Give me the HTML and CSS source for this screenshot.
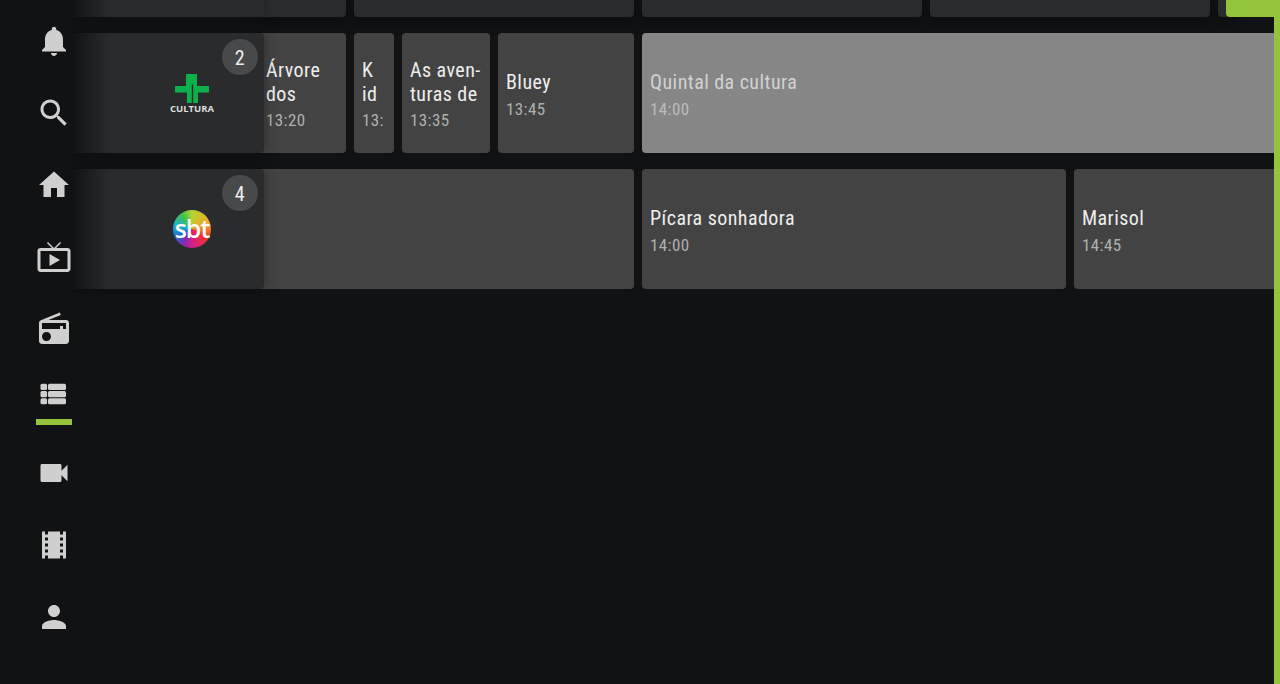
FILE: index.html
```html
<!DOCTYPE html>
<html lang="en">
<head>
    <meta charset="UTF-8">
    <meta name="viewport" content="width=device-width, initial-scale=1.0">
    <title>Guia de TV</title>
    <link rel="stylesheet" href="styles.css">
</head>
<body>

<nav class="sidebar">
    <svg class="nav-icon" viewBox="0 0 24 24"><path d="M12 22c1.1 0 2-.9 2-2h-4c0 1.1.89 2 2 2zm6-6v-5c0-3.07-1.64-5.64-4.5-6.32V4c0-.83-.67-1.5-1.5-1.5s-1.5.67-1.5 1.5v.68C7.63 5.36 6 7.92 6 11v5l-2 2v1h16v-1l-2-2z"/></svg>
    <svg class="nav-icon" viewBox="0 0 24 24"><path d="M15.5 14h-.79l-.28-.27C15.41 12.59 16 11.11 16 9.5 16 5.91 13.09 3 9.5 3S3 5.91 3 9.5 5.91 16 9.5 16c1.61 0 3.09-.59 4.23-1.57l.27.28v.79l5 4.99L20.49 19l-4.99-5zm-6 0C7.01 14 5 11.99 5 9.5S7.01 5 9.5 5 14 7.01 14 9.5 11.99 14 9.5 14z"/></svg>
    <svg class="nav-icon" viewBox="0 0 24 24"><path d="M10 20v-6h4v6h5v-8h3L12 3 2 12h3v8z"/></svg>
    <svg class="nav-icon" viewBox="0 0 24 24"><path d="M21 6h-7.59l3.29-3.29L16 2l-4 4-4-4-.71.71L10.59 6H3c-1.1 0-2 .89-2 2v12c0 1.1.9 2 2 2h18c1.1 0 2-.9 2-2V8c0-1.11-.9-2-2-2zm0 14H3V8h18v12zM9 10v8l7-4z"/></svg>
    <svg class="nav-icon" viewBox="0 0 24 24"><path d="M3.24 6.15C2.51 6.43 2 7.17 2 8v12c0 1.1.89 2 2 2h16c1.11 0 2-.9 2-2V8c0-1.11-.89-2-2-2H8.3l8.26-3.34L15.88 1 3.24 6.15zM7 20c-1.66 0-3-1.34-3-3s1.34-3 3-3 3 1.34 3 3-1.34 3-3 3zm13-8h-2v-2h-2v2H4V8h16v4z"/></svg>
    <div class="nav-active">
        <svg class="nav-icon" viewBox="0 0 24 24">
            <rect x="3" y="5.200" width="4.400" height="4.100" rx="1"/>
            <rect x="3" y="10" width="4.400" height="4.100" rx="1"/>
            <rect x="3" y="14.800" width="4.400" height="4.100" rx="1"/>
            <rect x="8" y="5.200" width="12" height="4.100" rx="1"/>
            <rect x="8" y="10" width="12" height="4.100" rx="1"/>
            <rect x="8" y="14.800" width="12" height="4.100" rx="1"/>
        </svg>
        <div class="nav-bar"></div>
    </div>
    <svg class="nav-icon" viewBox="0 0 24 24"><path d="M17 10.500V7c0-.55-.45-1-1-1H4c-.55 0-1 .45-1 1v10c0 .55.45 1 1 1h12c.55 0 1-.45 1-1v-3.500l4 4v-11l-4 4z"/></svg>
    <svg class="nav-icon" viewBox="0 0 24 24"><path d="M18 3v2h-2V3H8v2H6V3H4v18h2v-2h2v2h8v-2h2v2h2V3h-2zM8 17H6v-2h2v2zm0-4H6v-2h2v2zm0-4H6V7h2v2zm10 8h-2v-2h2v2zm0-4h-2v-2h2v2zm0-4h-2V7h2v2z"/></svg>
    <svg class="nav-icon" viewBox="0 0 24 24"><path d="M12 12c2.21 0 4-1.79 4-4s-1.79-4-4-4-4 1.79-4 4 1.790 4 4 4zm0 2c-2.67 0-8 1.34-8 4v2h16v-2c0-2.66-5.33-4-8-4z"/></svg>
</nav>

<main class="guide">
    <!-- row scrolled mostly out of view -->
    <section class="row row-dim">
        <div class="channel"></div>
        <div class="programs">
            <div class="program first" style="width:88px"></div>
            <div class="program" style="width:280px"></div>
            <div class="program" style="width:280px"></div>
            <div class="program" style="width:280px"></div>
            <div class="program" style="width:16px"></div>
            <div class="program live" style="width:60px"></div>
        </div>
    </section>

    <section class="row">
        <div class="channel">
            <span class="badge">2</span>
            <svg class="logo-cultura" viewBox="0 0 44 40">
                <path fill="#0cb14b" d="M16 0H27V12H39V18.500H28V29H23.200V10.500H21.800V29H17V18.500H5V12H16z"/>
                <text x="0" y="38" class="logo-text" textLength="44">CULTURA</text>
            </svg>
        </div>
        <div class="programs">
            <div class="program first two-line" style="width:88px">
                <div class="title">Árvore<br>dos</div>
                <div class="time">13:20</div>
            </div>
            <div class="program two-line" style="width:40px">
                <div class="title">K<br>id</div>
                <div class="time">13:</div>
            </div>
            <div class="program two-line" style="width:88px">
                <div class="title">As aven-<br>turas de</div>
                <div class="time">13:35</div>
            </div>
            <div class="program" style="width:136px">
                <div class="title">Bluey</div>
                <div class="time">13:45</div>
            </div>
            <div class="program selected" style="width:720px">
                <div class="title">Quintal da cultura</div>
                <div class="time">14:00</div>
            </div>
        </div>
    </section>

    <section class="row">
        <div class="channel">
            <span class="badge">4</span>
            <div class="logo-sbt"><span>sbt</span></div>
        </div>
        <div class="programs">
            <div class="program first" style="width:376px"></div>
            <div class="program" style="width:424px">
                <div class="title">Pícara sonhadora</div>
                <div class="time">14:00</div>
            </div>
            <div class="program" style="width:280px">
                <div class="title">Marisol</div>
                <div class="time">14:45</div>
            </div>
        </div>
    </section>
</main>

<div class="edge"></div>

</body>
</html>
```

FILE: styles.css
```css
html, body {
    height: 100%;
}
body {
    margin: 0;
    background-color: #111214;
    color: #eee;
    font-family: Roboto, sans-serif;
    font-stretch: 75%;
    display: flex;
    overflow: hidden;
}

/* side menu */
.sidebar {
    flex: 0 0 72px;
    box-sizing: border-box;
    padding: 23px 0 0 36px;
    display: flex;
    flex-direction: column;
    gap: 36px;
}
.nav-icon {
    display: block;
    width: 36px;
    height: 36px;
    fill: #cfcfcf;
}
.nav-active {
    height: 36px;
    margin-top: -7px;
    margin-bottom: 7px;
}
.nav-bar {
    height: 6px;
    margin-top: 7px;
    background-color: #93c43b;
}

/* guide grid */
.guide {
    flex: 1;
    min-width: 0;
    margin-top: -103px;
    margin-right: 6px;
    display: flex;
    flex-direction: column;
    gap: 16px;
    overflow: hidden;
}
.row {
    display: flex;
    flex: 0 0 120px;
    position: relative;
}
.row-dim .program {
    background-color: #2b2c2e;
    box-shadow: 0 8px 12px rgba(0,0,0,0.3);
}
.channel {
    flex: 0 0 192px;
    position: relative;
    z-index: 1;
    border-radius: 0 4px 4px 0;
    background: linear-gradient(to right, #111214 0, #2a2b2d 38px);
    box-shadow: 0 0 12px rgba(0,0,0,0.35);
    display: flex;
    align-items: center;
    justify-content: center;
}
.badge {
    position: absolute;
    top: 6px;
    right: 6px;
    width: 36px;
    height: 36px;
    border-radius: 50%;
    background-color: #48494b;
    color: #eee;
    font-size: 20px;
    line-height: 38px;
    letter-spacing: 0.4px;
    text-align: center;
}
.logo-cultura {
    width: 44px;
    height: 40px;
    margin-left: 48px;
    margin-top: 1px;
}
.logo-text {
    font-family: "Open Sans", sans-serif;
    font-stretch: normal;
    font-size: 9.500px;
    font-weight: 700;
    fill: #dcdcdc;
}
.logo-sbt {
    width: 38px;
    height: 38px;
    margin-left: 48px;
    border-radius: 50%;
    background: conic-gradient(#b5d334, #f5a623 70deg, #f02f2f 125deg, #d01f8f 180deg, #7a2fb5 215deg, #1e6fd0 245deg, #1fb5c9 285deg, #3fbf4a 325deg, #b5d334);
    color: #fff;
    font-family: "Open Sans", sans-serif;
    font-stretch: normal;
    font-size: 25px;
    font-weight: 600;
    line-height: 36px;
    letter-spacing: -1px;
    text-align: center;
}

.programs {
    flex: 1;
    min-width: 0;
    display: flex;
    gap: 8px;
}
.program {
    flex: none;
    box-sizing: border-box;
    padding: 6px 8px 0;
    border-radius: 4px;
    background-color: #434343;
    display: flex;
    flex-direction: column;
    justify-content: center;
    overflow: hidden;
}
.two-line {
    padding-top: 5px;
}
.first {
    margin-left: -6px;
}
.title {
    font-size: 20px;
    line-height: 24px;
    letter-spacing: 0.45px;
    color: #eee;
    white-space: nowrap;
}
.time {
    margin-top: 2px;
    font-size: 17px;
    line-height: 26px;
    letter-spacing: 0.4px;
    color: #b0b0b0;
    overflow: hidden;
    white-space: nowrap;
}
.two-line .time {
    margin-top: 1px;
}
.selected {
    background-color: #868686;
}
.selected .title {
    color: #d2d2d2;
}
.selected .time {
    color: #bdbdbd;
}

/* green strip on the right edge */
.edge {
    position: absolute;
    top: 0;
    right: 0;
    bottom: 0;
    width: 6px;
    background-color: #93c43b;
}
.row-dim .live {
    background-color: #93c43b;
    margin-left: -16px;
    box-shadow: none;
}
```
